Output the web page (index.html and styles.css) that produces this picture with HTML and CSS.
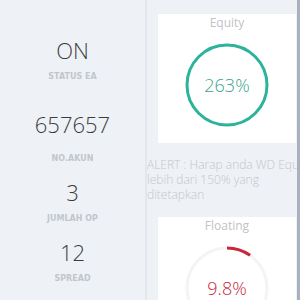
FILE: index.html
```html
<!DOCTYPE html>
<html lang="id">
<head>
    <meta charset="UTF-8">
    <meta name="viewport" content="width=device-width, initial-scale=1.0">
    <title>Dashboard EA</title>
    <link rel="stylesheet" href="styles.css">
</head>
<body>
    <div class="dashboard">
        <div class="stats">
            <div class="stat-value first">ON</div>
            <div class="stat-label">STATUS EA</div>

            <div class="stat-value wide">657657</div>
            <div class="stat-label wide">NO.AKUN</div>

            <div class="stat-value">3</div>
            <div class="stat-label">JUMLAH OP</div>

            <div class="stat-value">12</div>
            <div class="stat-label">SPREAD</div>
        </div>

        <div class="panel">
            <div class="card">
                <div class="card-title">Equity</div>
                <div class="gauge">
                    <svg width="84" height="84" viewBox="0 0 84 84">
                        <circle cx="42" cy="42" r="40" fill="none" stroke="#2bb39b" stroke-width="3"/>
                    </svg>
                    <span class="gauge-text equity">263%</span>
                </div>
            </div>

            <div class="alert">ALERT : Harap anda WD Equity lebih dari 150% yang ditetapkan</div>

            <div class="card">
                <div class="card-title">Floating</div>
                <div class="gauge">
                    <svg width="84" height="84" viewBox="0 0 84 84">
                        <circle cx="42" cy="42" r="40" fill="none" stroke="#f3f4f5" stroke-width="3"/>
                        <circle cx="42" cy="42" r="40" fill="none" stroke="#c8283c" stroke-width="3"
                            stroke-dasharray="24.6 251.3" transform="rotate(-90 42 42)"/>
                    </svg>
                    <span class="gauge-text floating">9.8%</span>
                </div>
            </div>
        </div>

        <div class="edge"></div>
    </div>
</body>
</html>
```

FILE: styles.css
```css
body {
    margin: 0;
    font-family: "Open Sans", "DejaVu Sans", sans-serif;
    background-color: #eef2f6;
    overflow: hidden;
}

.dashboard {
    display: flex;
    height: 300px;
}

.stats {
    width: 145px;
    flex-shrink: 0;
    border-right: 2px solid #e3e7ec;
    display: flex;
    flex-direction: column;
    align-items: center;
}

.stat-value {
    font-size: 22px;
    font-weight: 300;
    line-height: 26px;
    color: #3a3d40;
    margin-top: 15px;
}

.stat-value.first {
    margin-top: 37px;
}

.stat-value.wide {
    margin-top: 29px;
}

.stat-label {
    font-family: "DejaVu Sans", sans-serif;
    font-size: 8px;
    font-weight: 700;
    line-height: 10px;
    color: #c2c6cb;
    margin-top: 9px;
}

.stat-label.wide {
    margin-top: 17px;
}

.panel {
    width: 150px;
    flex-shrink: 0;
    overflow: hidden;
    padding-top: 14px;
}

.card {
    width: 138px;
    margin-left: 11px;
    background-color: #fff;
    padding: 1px 0 16px;
    display: flex;
    flex-direction: column;
    align-items: center;
}

.card-title {
    font-size: 12px;
    line-height: 16px;
    color: #bfc3c7;
}

.gauge {
    position: relative;
    width: 84px;
    height: 84px;
    margin-top: 12px;
}

.gauge svg {
    display: block;
}

.gauge-text {
    position: absolute;
    inset: 0;
    display: flex;
    align-items: center;
    justify-content: center;
    font-size: 18px;
    font-weight: 300;
}

.equity {
    color: #3aa48f;
}

.floating {
    color: #c8283c;
}

.alert {
    width: 172px;
    font-size: 12px;
    font-weight: 300;
    line-height: 15px;
    color: #c3c6ca;
    margin: 14px 0 15px;
}

.edge {
    width: 3px;
    flex-shrink: 0;
    background-color: #a9b1bf;
}
```
